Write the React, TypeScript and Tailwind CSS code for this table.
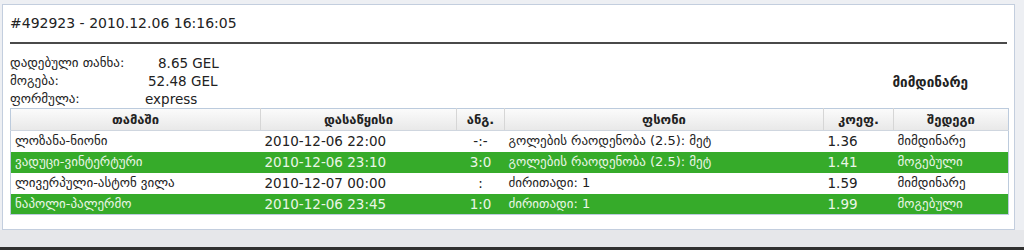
import React from 'react';

interface Bet {
  game: string;
  start: string;
  score: string;
  pick: string;
  odds: string;
  result: string;
  won: boolean;
}

const bets: Bet[] = [
  { game: 'ლოზანა-ნიონი', start: '2010-12-06 22:00', score: '-:-', pick: 'გოლების რაოდენობა (2.5): მეტ', odds: '1.36', result: 'მიმდინარე', won: false },
  { game: 'ვადუცი-ვინტერტური', start: '2010-12-06 23:10', score: '3:0', pick: 'გოლების რაოდენობა (2.5): მეტ', odds: '1.41', result: 'მოგებული', won: true },
  { game: 'ლივერპული-ასტონ ვილა', start: '2010-12-07 00:00', score: ':', pick: 'ძირითადი: 1', odds: '1.59', result: 'მიმდინარე', won: false },
  { game: 'ნაპოლი-პალერმო', start: '2010-12-06 23:45', score: '1:0', pick: 'ძირითადი: 1', odds: '1.99', result: 'მოგებული', won: true },
];

const headers = ['თამაში', 'დასაწყისი', 'ანგ.', 'ფსონი', 'კოეფ.', 'შედეგი'];

const App: React.FC = () => {
  return (
    <div className="w-[1024px] h-[250px] bg-[#edeff3] overflow-hidden flex flex-col font-['DejaVu_Sans',sans-serif] text-[#222]">
      <div className="ml-[2px] mt-[4px] w-[1013px] border border-[#c3cede] bg-white px-[7px] pb-[14px]">
        <div className="pt-[10px] text-[14px] leading-[16px]">#492923 - 2010.12.06 16:16:05</div>
        <div className="mt-[11px] h-[2px] bg-[#4a4a4a]"></div>

        {/* bet summary */}
        <div className="mt-[10px] flex items-center text-[13.5px] leading-[18px]">
          <div>
            <div className="flex">
              <span className="w-[148px] text-[13px]">დადებული თანხა:</span>
              <span>8.65 GEL</span>
            </div>
            <div className="flex">
              <span className="w-[138px] text-[13px]">მოგება:</span>
              <span>52.48 GEL</span>
            </div>
            <div className="flex">
              <span className="w-[135px] text-[13px]">ფორმულა:</span>
              <span>express</span>
            </div>
          </div>
          <div className="ml-auto mr-[39px] pt-[2px] text-[13.5px] font-bold">მიმდინარე</div>
        </div>

        <table className="w-full table-fixed border-collapse border border-[#bccbdd] text-[13.5px] leading-[20px]">
          <colgroup>
            <col className="w-[250px]" />
            <col className="w-[196px]" />
            <col className="w-[48px]" />
            <col className="w-[319px]" />
            <col className="w-[70px]" />
            <col className="w-[115px]" />
          </colgroup>
          <thead>
            <tr className="h-[22px] bg-gradient-to-b from-[#fbfbfb] to-[#e8e8e8]">
              {headers.map((h) => (
                <th key={h} className="border-l border-[#d6d6d6] first:border-l-0 border-b border-b-[#cfd6df] text-center text-[13px] font-bold">
                  {h}
                </th>
              ))}
            </tr>
          </thead>
          <tbody>
            {bets.map((b, i) => (
              <tr key={i} className={b.won ? 'h-[21px] bg-[#36ab2a] text-[#eaf6e6]' : 'h-[21px] bg-white'}>
                <td className="pl-[4px] text-[13px] whitespace-nowrap">{b.game}</td>
                <td className="pl-[4px] whitespace-nowrap">{b.start}</td>
                <td className="text-center">{b.score}</td>
                <td className="pl-[4px] text-[13px] whitespace-nowrap">{b.pick}</td>
                <td className="pl-[4px]">{b.odds}</td>
                <td className="pl-[4px] text-[13px] whitespace-nowrap">{b.result}</td>
              </tr>
            ))}
          </tbody>
        </table>
      </div>
      <div className="flex-1 bg-[#e6e7ea]"></div>
      <div className="h-[3px] bg-[#303030]"></div>
    </div>
  );
};

export default App;
